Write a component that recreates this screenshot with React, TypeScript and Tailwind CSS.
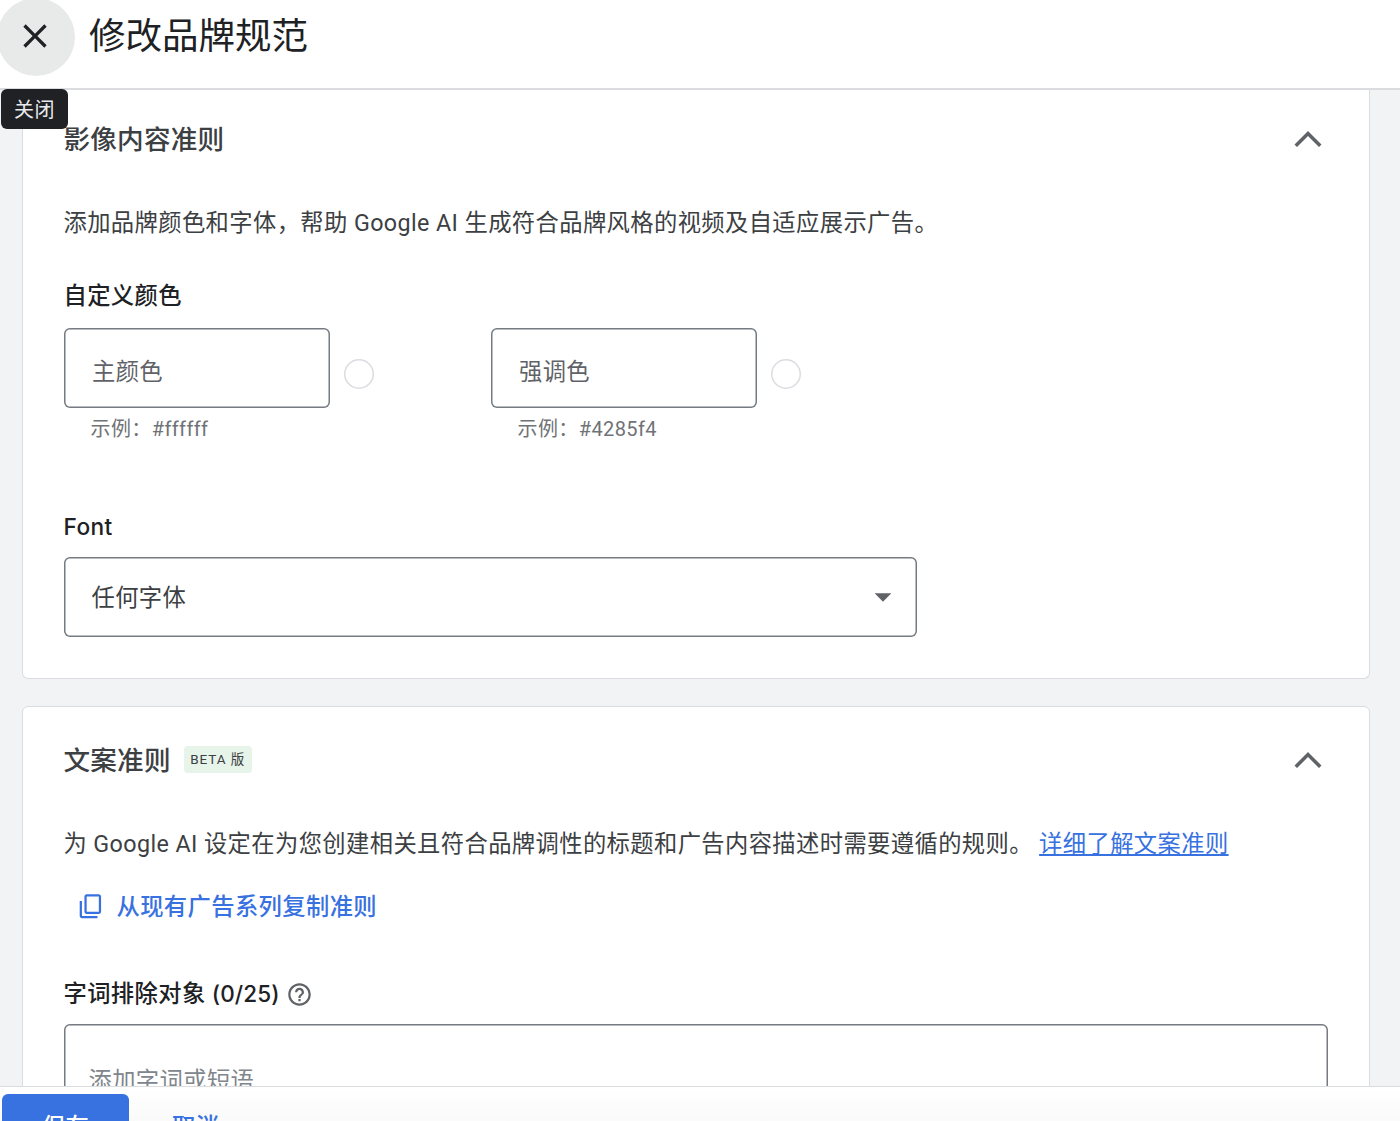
import React, { useState } from 'react';

const colorFields = [
  { label: '主颜色', example: '#ffffff' },
  { label: '强调色', example: '#4285f4' },
];

const Chevron = ({ open }: { open: boolean }) => (
  <svg viewBox="0 0 24 24" className={`h-10 w-10 fill-[#5f6368] ${open ? '' : 'rotate-180'}`}>
    <path d="M12 7.2l-8.1 8.1 1.5 1.5L12 10.2l6.6 6.6 1.5-1.5z" />
  </svg>
);

const CopyIcon = () => (
  <svg viewBox="0 0 24 24" className="h-[27px] w-[27px] fill-[#3871e0]">
    <path d="M19.4 1H8.6c-1.1 0-2 .9-2 2v13.6c0 1.1.9 2 2 2h10.8c1.1 0 2-.9 2-2V3c0-1.1-.9-2-2-2zm0 15.6H8.6V3h10.8v13.6zM2.4 20.4V7h2v13.4h13.8v2H4.4c-1.1 0-2-.9-2-2z" />
  </svg>
);

const HelpIcon = () => (
  <svg viewBox="0 0 24 24" className="h-[27px] w-[27px] fill-[#5f6368]">
    <path d="M11 18h2v-2h-2v2zm1-16C6.48 2 2 6.48 2 12s4.48 10 10 10 10-4.48 10-10S17.52 2 12 2zm0 18c-4.41 0-8-3.59-8-8s3.59-8 8-8 8 3.59 8 8-3.59 8-8 8zm0-14c-2.21 0-4 1.79-4 4h2c0-1.1.9-2 2-2s2 .9 2 2c0 2-3 1.75-3 5h2c0-2.25 3-2.5 3-5 0-2.21-1.79-4-4-4z" />
  </svg>
);

const SectionHeader = ({ title, badge, open, onToggle }: { title: string; badge?: string; open: boolean; onToggle: () => void }) => (
  <div className="flex h-[97px] items-center pr-[41px]">
    <h2 className="pt-[2px] text-[26.6px] leading-10 font-medium tracking-[0.2px] text-[#3c4043]">{title}</h2>
    {badge && (
      <span className="ml-[13px] flex h-[27px] w-[68px] items-center justify-center rounded bg-[#e6f4ea] text-[13.5px] tracking-[0.9px] whitespace-nowrap text-[#3c4043]">
        {badge}
      </span>
    )}
    <button className="ml-auto" onClick={onToggle} aria-label={title}>
      <Chevron open={open} />
    </button>
  </div>
);

export default function App() {
  const [imageOpen, setImageOpen] = useState(true);
  const [copyOpen, setCopyOpen] = useState(true);

  return (
    <div className="flex h-[1121px] w-[1400px] flex-col overflow-hidden bg-white font-['Roboto','Noto_Sans_CJK_SC',sans-serif] text-[23.3px] tracking-[0.39px] text-[#3c4043]">
      <header className="relative z-10 flex h-[90px] shrink-0 border-b-2 border-[#dadce0] bg-white">
        <button className="-mt-[2px] -ml-[3px] flex h-[78px] w-[78px] shrink-0 items-center justify-center rounded-full bg-[#e8eaea] pr-[2px] pb-[2px]" aria-label="关闭">
          <svg viewBox="0 0 24 24" className="h-10 w-10 fill-[#202124]">
            <path d="M19 6.41L17.59 5 12 10.59 6.41 5 5 6.41 10.59 12 5 17.59 6.41 19 12 13.41 17.59 19 19 17.59 13.41 12z" />
          </svg>
        </button>
        <h1 className="ml-[14px] text-[36.5px] leading-[74px] tracking-normal text-[#202124]">修改品牌规范</h1>
        <div className="absolute top-[89px] left-px flex h-10 w-[67px] items-center justify-center rounded-[6px] bg-[#202124] pt-px text-[20px] text-[#e8eaed]">
          关闭
        </div>
      </header>

      <main className="flex min-h-0 flex-1 flex-col gap-[27px] overflow-hidden bg-[#f1f3f4] pr-[30px] pl-[22px]">
        <section className="h-[589px] shrink-0 rounded-b-[6px] border-x border-b border-[#dadce0] bg-white pl-[40.5px]">
          <SectionHeader title="影像内容准则" open={imageOpen} onToggle={() => setImageOpen(!imageOpen)} />
          {imageOpen && (
            <>
              <p className="mt-[14px] leading-[44px] whitespace-nowrap">
                添加品牌颜色和字体，帮助 Google AI 生成符合品牌风格的视频及自适应展示广告。
              </p>
              <h3 className="mt-[35px] leading-8 font-medium text-[#202124]">自定义颜色</h3>
              <div className="mt-4 flex gap-[117px]">
                {colorFields.map((field) => (
                  <div key={field.label} className="w-[310px]">
                    <div className="flex items-center gap-[14px]">
                      <div className="flex h-20 w-[266px] items-center rounded-[6px] pt-[8px] pl-[28.5px] text-[#5f6368] ring-[1.5px] ring-[#757b81] ring-inset">
                        {field.label}
                      </div>
                      <div className="mt-[12px] h-[30px] w-[30px] rounded-full ring-[1.5px] ring-[#dadce0] ring-inset" />
                    </div>
                    <div className="mt-[5px] pl-[27px] text-[20px] leading-8 text-[#6f7377]">示例：{field.example}</div>
                  </div>
                ))}
              </div>
              <h3 className="mt-[66px] font-['Inter'] text-[22.7px] leading-8 font-medium text-[#202124]">Font</h3>
              <div className="mt-[14px] flex h-20 w-[853.5px] items-center justify-between rounded-[6px] pr-[14px] pl-[28px] ring-[1.5px] ring-[#757b81] ring-inset">
                <span className="pt-[2px]">任何字体</span>
                <svg viewBox="0 0 24 24" className="h-10 w-10 fill-[#5f6368]">
                  <path d="M7 9.8l5 5 5-5z" />
                </svg>
              </div>
            </>
          )}
        </section>

        <section className="h-[700px] shrink-0 rounded-[6px] border border-[#dadce0] bg-white pt-[4px] pl-[40.5px]">
          <SectionHeader title="文案准则" badge="BETA 版" open={copyOpen} onToggle={() => setCopyOpen(!copyOpen)} />
          {copyOpen && (
            <>
              <p className="mt-[14px] leading-[44px] whitespace-nowrap">
                为 Google AI 设定在为您创建相关且符合品牌调性的标题和广告内容描述时需要遵循的规则。{' '}
                <a href="#" className="text-[#3871e0] underline decoration-[1.5px] underline-offset-2">详细了解文案准则</a>
              </p>
              <button className="mt-5 ml-[13px] flex h-10 items-center gap-[13px] font-medium text-[#3871e0]">
                <CopyIcon />
                <span className="pt-[2px]">从现有广告系列复制准则</span>
              </button>
              <div className="mt-[52px] flex h-8 items-center gap-[6px]">
                <h3 className="leading-8 font-medium text-[#202124]">
                  字词排除对象 <span className="font-['Inter'] text-[22.5px] tracking-[0.1px]">(0/25)</span>
                </h3>
                <HelpIcon />
              </div>
              <div className="mt-[14px] h-[200px] w-[1264.5px] rounded-[6px] pt-[41px] pl-[25px] leading-8 text-[#80868b] ring-[1.5px] ring-[#757b81] ring-inset">
                添加字词或短语
              </div>
            </>
          )}
        </section>
      </main>

      <footer className="flex h-[35px] shrink-0 items-start border-t border-[#dadce0] bg-linear-to-b from-white to-[#fafafa] pt-[7px] font-medium">
        <button className="ml-[2px] h-[60px] w-[127px] shrink-0 rounded-[6px] bg-[#3871e0] pt-[6px] text-white">保存</button>
        <button className="ml-[43px] h-[60px] shrink-0 pt-[6px] text-[#3871e0]">取消</button>
      </footer>
    </div>
  );
}
